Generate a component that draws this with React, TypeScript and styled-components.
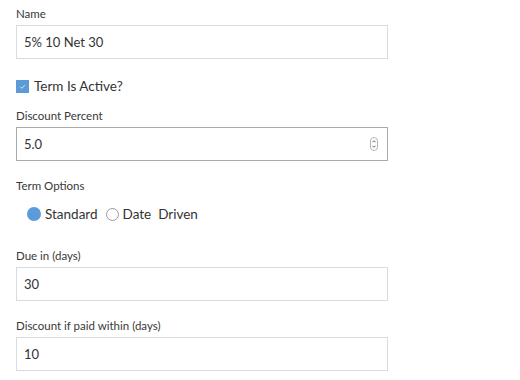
import styled, { createGlobalStyle } from "styled-components";

const GlobalStyle = createGlobalStyle`
  html, body {
    margin: 0;
    padding: 0;
    background: #ffffff;
  }
  body {
    font-family: Lato, "Liberation Sans", sans-serif;
    color: #333333;
  }
`;

const Form = styled.form`
  width: 372px;
  padding: 6px 0 0 16px;
`;

const Field = styled.div`
  display: flex;
  flex-direction: column;
  margin-bottom: 17px;
`;

const Label = styled.label`
  font-size: 11.5px;
  line-height: 16px;
  height: 16px;
  color: #383838;
  margin-bottom: 3px;
`;

const InputBox = styled.div<{ $strong?: boolean }>`
  display: flex;
  align-items: center;
  height: 34px;
  box-sizing: border-box;
  border: 1px solid ${(p) => (p.$strong ? "#aaaaaa" : "#d6dce1")};
  padding: 0 8px 0 7px;
  font-size: 13px;
  color: #333333;
`;

const InputText = styled.span`
  flex: 1;
`;

const Spinner = styled.svg`
  width: 8px;
  height: 14px;
  margin-right: 1px;
`;

const CheckRow = styled.label`
  display: flex;
  align-items: center;
  gap: 5px;
  height: 20px;
  margin-bottom: 12px;
  font-size: 13.5px;
`;

const CheckBox = styled.span`
  width: 13px;
  height: 13px;
  background: #5c9bd6;
  display: flex;
  align-items: center;
  justify-content: center;
  svg {
    width: 9px;
    height: 9px;
  }
`;

const Section = styled.div`
  display: flex;
  flex-direction: column;
`;

const RadioRow = styled.div`
  display: flex;
  align-items: center;
  height: 20px;
  padding-left: 11px;
  margin-top: 7px;
  margin-bottom: 24px;
  font-size: 13.5px;
`;

const RadioOption = styled.label`
  display: flex;
  align-items: center;
  gap: 4px;
  margin-right: 8px;
  white-space: pre;
`;

const RadioDot = styled.span<{ $on?: boolean }>`
  box-sizing: border-box;
  width: ${(p) => (p.$on ? 14 : 13)}px;
  height: ${(p) => (p.$on ? 14 : 13)}px;
  border-radius: 50%;
  background: ${(p) => (p.$on ? "#5c9bd9" : "#ffffff")};
  border: ${(p) => (p.$on ? "none" : "1px solid #9a9a9a")};
`;

export default function App() {
  return (
    <>
      <GlobalStyle />
      <Form>
        <Field>
          <Label>Name</Label>
          <InputBox>
            <InputText>5% 10 Net 30</InputText>
          </InputBox>
        </Field>

        <CheckRow>
          <CheckBox>
            <svg viewBox="0 0 10 10">
              <path d="M2.5 5.2 L4.3 7 L7.6 3.4" fill="none" stroke="#dbe9f7" strokeWidth="1" />
            </svg>
          </CheckBox>
          Term Is Active?
        </CheckRow>

        <Field>
          <Label>Discount Percent</Label>
          <InputBox $strong>
            <InputText>5.0</InputText>
            <Spinner viewBox="0 0 8 14">
              <rect x="0.5" y="0.5" width="7" height="13" rx="3.5" fill="#fff" stroke="#b5b5b5" />
              <path d="M2.4 5.3 L4 3.7 L5.6 5.3" fill="none" stroke="#555" strokeWidth="0.9" />
              <path d="M2.4 8.7 L4 10.3 L5.6 8.7" fill="none" stroke="#555" strokeWidth="0.9" />
            </Spinner>
          </InputBox>
        </Field>

        <Section>
          <Label>Term Options</Label>
          <RadioRow>
            <RadioOption>
              <RadioDot $on />
              Standard
            </RadioOption>
            <RadioOption>
              <RadioDot />
              {"Date  Driven"}
            </RadioOption>
          </RadioRow>
        </Section>

        <Field>
          <Label>Due in (days)</Label>
          <InputBox>
            <InputText>30</InputText>
          </InputBox>
        </Field>

        <Field>
          <Label>Discount if paid within (days)</Label>
          <InputBox>
            <InputText>10</InputText>
          </InputBox>
        </Field>
      </Form>
    </>
  );
}
